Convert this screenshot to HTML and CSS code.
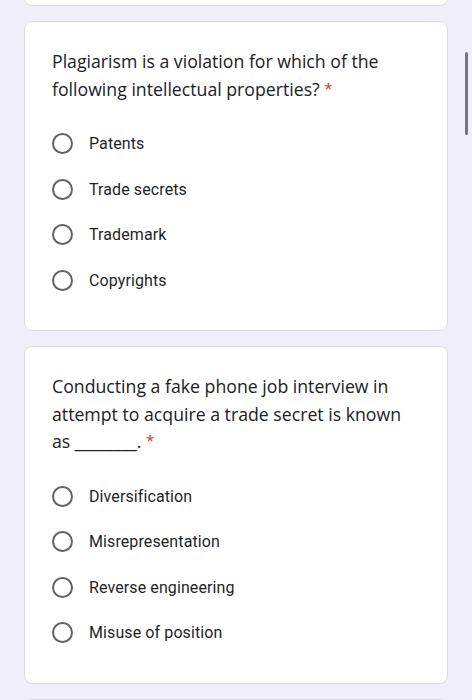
FILE: index.html
```html
<!DOCTYPE html>
<html>
<head>
<meta charset="utf-8">
<link rel="stylesheet" href="styles.css">
</head>
<body>
<div class="page">
  <div class="card card-prev"></div>
  <div class="card">
    <div class="question">Plagiarism is a violation for which of the following intellectual properties? <span class="req">*</span></div>
    <div class="options">
      <div class="option"><span class="radio"></span><span class="label">Patents</span></div>
      <div class="option"><span class="radio"></span><span class="label">Trade secrets</span></div>
      <div class="option"><span class="radio"></span><span class="label">Trademark</span></div>
      <div class="option"><span class="radio"></span><span class="label">Copyrights</span></div>
    </div>
  </div>
  <div class="card">
    <div class="question">Conducting a fake phone job interview in attempt to acquire a trade secret is known as ________. <span class="req">*</span></div>
    <div class="options">
      <div class="option"><span class="radio"></span><span class="label">Diversification</span></div>
      <div class="option"><span class="radio"></span><span class="label">Misrepresentation</span></div>
      <div class="option"><span class="radio"></span><span class="label">Reverse engineering</span></div>
      <div class="option"><span class="radio"></span><span class="label">Misuse of position</span></div>
    </div>
  </div>
  <div class="card card-next"></div>
</div>
<div class="scrollbar"></div>
</body>
</html>
```
FILE: styles.css
```css
html, body {
  margin: 0;
  padding: 0;
  background: #f0eef8;
  height: 700px;
  overflow: hidden;
}
.page {
  display: flex;
  flex-direction: column;
  gap: 15px;
  width: 424px;
  margin-left: 24px;
  margin-top: -45px;
}
.card {
  background: #fff;
  border: 1px solid #dcdbe3;
  border-radius: 8px;
  padding: 26px 27px 27px 27px;
  box-sizing: border-box;
}
.card-prev {
  height: 51px;
  padding: 0;
}
.card-next {
  height: 60px;
  padding: 0;
}
.question {
  font-family: "Open Sans", "Noto Sans", sans-serif;
  font-size: 17.7px;
  line-height: 27.5px;
  color: #202124;
  letter-spacing: 0;
}
.req {
  color: #d93025;
  font-size: 15px;
  line-height: 1;
  vertical-align: 2px;
}
.options {
  margin-top: 18px;
  display: flex;
  flex-direction: column;
}
.option {
  height: 45.5px;
  display: flex;
  align-items: center;
}
.radio {
  width: 17px;
  height: 17px;
  border: 2px solid #5f6368;
  border-radius: 50%;
  flex: none;
}
.label {
  margin-left: 16px;
  font-family: Roboto, "Liberation Sans", sans-serif;
  font-size: 16px;
  color: #1f1f1f;
  letter-spacing: 0.1px;
}
.scrollbar {
  position: fixed;
  left: 465px;
  top: 52px;
  width: 3px;
  height: 83px;
  background: #77767d;
  border-radius: 2px;
}
```
